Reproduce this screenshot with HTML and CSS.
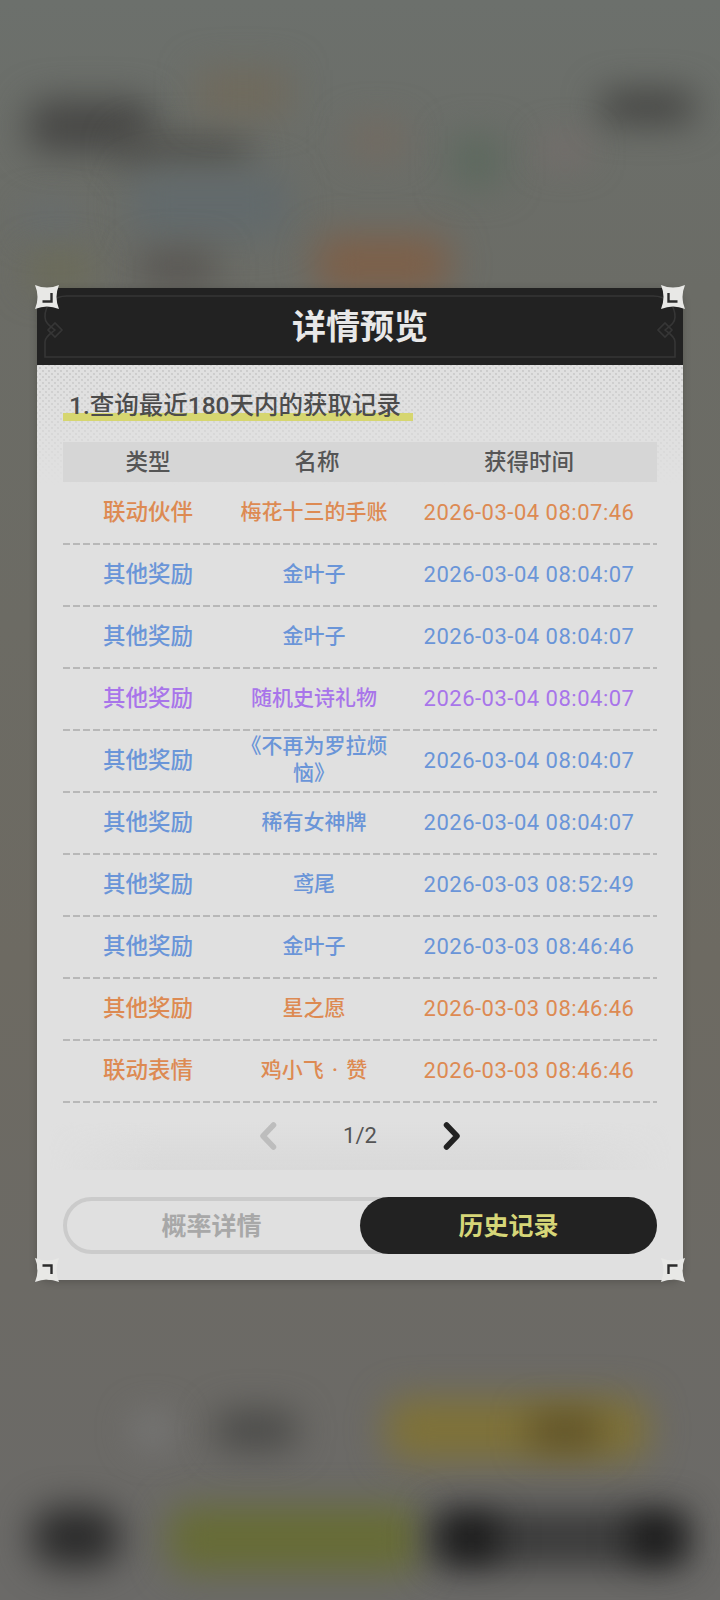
FILE: index.html

```html
<!DOCTYPE html>
<html lang="zh-CN">

<head>
    <meta charset="UTF-8">
    <meta name="viewport" content="width=device-width, initial-scale=1.0">
    <title>详情预览</title>
    <link rel="stylesheet" href="styles.css">
</head>

<body>
    <!-- blurred game scene behind the dialog -->
    <div class="scene">
        <div class="blob blob-a"></div>
        <div class="blob blob-b"></div>
        <div class="blob blob-c"></div>
        <div class="blob blob-d"></div>
        <div class="blob blob-e"></div>
        <div class="blob blob-f"></div>
        <div class="blob blob-g"></div>
        <div class="blob blob-h"></div>
        <div class="blob blob-i"></div>
        <div class="blob blob-j"></div>
        <div class="blob blob-k"></div>
        <div class="blob blob-l"></div>
        <div class="blob blob-m"></div>
        <div class="blob blob-n"></div>
        <div class="blob blob-o"></div>
        <div class="blob blob-p"></div>
        <div class="blob blob-q"></div>
        <div class="blob blob-r"></div>
        <div class="blob blob-s"></div>
        <div class="blob blob-t"></div>
        <div class="blob blob-u"></div>
    </div>

    <div class="dialog">
        <svg class="corner corner-tl" viewBox="0 0 24 24"><use href="#star"></use></svg>
        <svg class="corner corner-tr" viewBox="0 0 24 24"><use href="#star"></use></svg>
        <svg class="corner corner-bl" viewBox="0 0 24 24"><use href="#star"></use></svg>
        <svg class="corner corner-br" viewBox="0 0 24 24"><use href="#star"></use></svg>

        <header class="dialog-head">
            <svg class="head-frame" viewBox="0 0 646 77">
                <path d="M30 8H616C630 8 638 17 638 29C638 35 633 38 628 42C633 46 638 49 638 54V69H8V54C8 49 13 46 18 42C13 38 8 35 8 29C8 17 16 8 30 8Z" />
                <path d="M11 42L18 35L25 42L18 49Z" />
                <path d="M635 42L628 35L621 42L628 49Z" />
            </svg>
            <h1>详情预览</h1>
        </header>

        <div class="dialog-body">
            <div class="note-wrap">
                <h2 class="note">1.查询最近180天内的获取记录</h2>
            </div>

            <div class="table-head">
                <span>类型</span>
                <span>名称</span>
                <span>获得时间</span>
            </div>

            <div class="row orange"><span>联动伙伴</span><span>梅花十三的手账</span><span>2026-03-04 08:07:46</span></div>
            <div class="row blue"><span>其他奖励</span><span>金叶子</span><span>2026-03-04 08:04:07</span></div>
            <div class="row blue"><span>其他奖励</span><span>金叶子</span><span>2026-03-04 08:04:07</span></div>
            <div class="row purple"><span>其他奖励</span><span>随机史诗礼物</span><span>2026-03-04 08:04:07</span></div>
            <div class="row blue"><span>其他奖励</span><span>《不再为罗拉烦恼》</span><span>2026-03-04 08:04:07</span></div>
            <div class="row blue"><span>其他奖励</span><span>稀有女神牌</span><span>2026-03-04 08:04:07</span></div>
            <div class="row blue"><span>其他奖励</span><span>鸢尾</span><span>2026-03-03 08:52:49</span></div>
            <div class="row blue"><span>其他奖励</span><span>金叶子</span><span>2026-03-03 08:46:46</span></div>
            <div class="row orange"><span>其他奖励</span><span>星之愿</span><span>2026-03-03 08:46:46</span></div>
            <div class="row orange"><span>联动表情</span><span>鸡小飞 · 赞</span><span>2026-03-03 08:46:46</span></div>

            <div class="pager">
                <svg class="arrow arrow-off" viewBox="0 0 18 28"><path d="M14.5 3L4 14L14.5 25" /></svg>
                <span class="page-num">1/2</span>
                <svg class="arrow" viewBox="0 0 18 28"><path d="M3.5 3L14 14L3.5 25" /></svg>
            </div>
        </div>

        <div class="dialog-foot">
            <div class="tabs">
                <div class="tab">概率详情</div>
                <div class="tab tab-on">历史记录</div>
            </div>
        </div>
    </div>

    <svg class="defs" width="0" height="0">
        <defs>
            <g id="star">
                <path class="star-fill" d="M0 0Q12 5 24 0Q19 12 24 24Q12 19 0 24Q5 12 0 0Z" />
                <path class="star-mark" d="M16.5 8V16.5H7.5" />
            </g>
        </defs>
    </svg>
</body>

</html>
```

FILE: styles.css

```css
* {
    box-sizing: border-box;
}
html, body {
    margin: 0;
    padding: 0;
}
body {
    width: 720px;
    height: 1600px;
    position: relative;
    overflow: hidden;
    background-color: #6c6b66;
    font-family: Roboto, "Noto Sans CJK SC", "Noto Sans", sans-serif;
}
.defs {
    position: absolute;
}

/* backdrop */
.scene {
    position: absolute;
    inset: 0;
    overflow: hidden;
    background: linear-gradient(180deg, #6c706c 0%, #6b6c66 18%, #6d6a62 60%, #6b6a68 100%);
}
.blob {
    position: absolute;
    filter: blur(18px);
}
.blob-a { left: 28px; top: 100px; width: 125px; height: 52px; background: #474745; border-radius: 18px; }
.blob-b { left: 120px; top: 136px; width: 130px; height: 32px; background: #50504c; border-radius: 14px; }
.blob-c { left: 600px; top: 92px; width: 94px; height: 30px; background: #40403e; border-radius: 12px; }
.blob-d { left: 130px; top: 172px; width: 160px; height: 66px; background: #626a6c; border-radius: 20px; }
.blob-e { left: 26px; top: 208px; width: 50px; height: 24px; background: #666d70; }
.blob-f { left: 315px; top: 236px; width: 135px; height: 56px; background: #7d6049; border-radius: 20px; }
.blob-g { left: 197px; top: 70px; width: 92px; height: 46px; background: #706a5c; }
.blob-h { left: 452px; top: 136px; width: 50px; height: 50px; background: #5c695e; }
.blob-i { left: 134px; top: 1414px; width: 38px; height: 32px; background: #7c7c7c; border-radius: 50%; }
.blob-j { left: 216px; top: 1412px; width: 80px; height: 36px; background: #484846; border-radius: 12px; }
.blob-k { left: 386px; top: 1398px; width: 262px; height: 62px; background: #7f7238; border-radius: 20px; }
.blob-l { left: 168px; top: 1506px; width: 254px; height: 66px; background: #676c36; border-radius: 20px; }
.blob-m { left: 32px; top: 1508px; width: 88px; height: 58px; background: #2a2a2a; border-radius: 26px; }
.blob-n { left: 430px; top: 1510px; width: 256px; height: 56px; background: #3a3a3a; border-radius: 14px; }
.blob-o { left: 444px; top: 1518px; width: 54px; height: 40px; background: #141414; }
.blob-p { left: 630px; top: 1518px; width: 52px; height: 40px; background: #141414; }
.blob-q { left: 530px; top: 1414px; width: 70px; height: 34px; background: #5d4f26; }
.blob-r { left: 140px; top: 252px; width: 75px; height: 32px; background: #565350; }
.blob-s { left: 350px; top: 124px; width: 54px; height: 32px; background: #746a60; }
.blob-t { left: 544px; top: 140px; width: 42px; height: 20px; background: #7b6e6d; }
.blob-u { left: 30px; top: 254px; width: 62px; height: 32px; background: #6c6c56; }

/* dialog */
.dialog {
    position: absolute;
    left: 37px;
    top: 288px;
    width: 646px;
    height: 992px;
    display: flex;
    flex-direction: column;
    background-color: #e0e0e0;
    border-radius: 14px;
    box-shadow: 0 2px 8px rgba(0, 0, 0, .2);
}
.corner {
    position: absolute;
    width: 24px;
    height: 24px;
    z-index: 2;
}
.star-fill {
    fill: #e8e8e6;
}
.star-mark {
    fill: none;
    stroke: #2c2c2c;
    stroke-width: 2.4;
}
.corner-tl { left: -2px; top: -3px; }
.corner-tr { right: -2px; top: -3px; transform: scaleX(-1); }
.corner-bl { left: -2px; bottom: -2px; transform: scaleY(-1); }
.corner-br { right: -2px; bottom: -2px; transform: scale(-1); }

.dialog-head {
    position: relative;
    height: 77px;
    display: flex;
    align-items: center;
    justify-content: center;
    background-color: #222;
    border-radius: 14px 14px 0 0;
}
.head-frame {
    position: absolute;
    inset: 0;
    width: 100%;
    height: 100%;
}
.head-frame path {
    fill: none;
    stroke: #363636;
    stroke-width: 1.6;
}
.dialog-head h1 {
    position: relative;
    margin: 0 0 -2px;
    color: #e8e8e8;
    font-size: 34px;
    font-weight: 700;
    line-height: 1.2;
}

.dialog-body {
    position: relative;
    height: 805px;
    padding: 0 26px;
    background-color: #e0e0e0;
    background-image:
        linear-gradient(180deg, transparent 0, #e0e0e0 120px),
        radial-gradient(circle, rgba(150, 150, 150, .28) 1px, transparent 1.5px),
        radial-gradient(circle, rgba(150, 150, 150, .28) 1px, transparent 1.5px);
    background-size: 100% 100%, 6px 6px, 6px 6px;
    background-position: 0 0, 0 0, 3px 3px;
    background-repeat: no-repeat, repeat, repeat;
}
/* soft shade above the tabs, fades out to the sides */
.dialog-body::after {
    content: "";
    position: absolute;
    left: 12px;
    right: 12px;
    bottom: 0;
    height: 48px;
    background: linear-gradient(180deg, transparent, #d9d9d9);
    -webkit-mask-image: linear-gradient(90deg, transparent, #000 18%, #000 82%, transparent);
    mask-image: linear-gradient(90deg, transparent, #000 18%, #000 82%, transparent);
}
.note-wrap {
    height: 77px;
    padding-top: 27px;
}
.note {
    display: inline-block;
    width: 350px;
    margin: 0;
    padding: 2px 0 4px 6px;
    color: #4c4c4c;
    font-size: 24.5px;
    font-weight: 500;
    line-height: 23px;
    white-space: nowrap;
    background: linear-gradient(#d6d670, #d6d670) left bottom / 100% 8px no-repeat;
}

.table-head,
.row {
    display: grid;
    align-items: center;
    text-align: center;
}
.table-head {
    grid-template-columns: 170px 168px 256px;
    height: 40px;
    margin-bottom: 1px;
    padding-bottom: 5px;
    background-color: #d6d6d6;
    color: #555;
    font-size: 22.5px;
    font-weight: 500;
}
.row {
    grid-template-columns: 170px 162px 262px;
    height: 62px;
    padding-bottom: 4px;
    font-size: 21px;
    line-height: 27px;
    font-weight: 500;
    background: repeating-linear-gradient(90deg, #b8b8b8 0 7px, transparent 7px 10px) left bottom / 100% 2px no-repeat;
}
.row span:first-child {
    font-size: 22.5px;
}
.row span:nth-child(2) {
    padding: 0 4px;
    word-spacing: 3px;
}
.row span:last-child {
    padding-left: 6px;
    font-size: 22px;
    font-weight: 400;
    letter-spacing: .5px;
    white-space: nowrap;
}
.orange { color: #dd8a52; }
.blue { color: #6a95d8; }
.purple { color: #a875ea; }

.pager {
    position: relative;
    z-index: 1;
    height: 65px;
    display: flex;
    align-items: center;
    justify-content: center;
    gap: 65px;
}
.arrow {
    width: 18px;
    height: 28px;
}
.arrow path {
    fill: none;
    stroke: #222;
    stroke-width: 5.5;
    stroke-linecap: round;
    stroke-linejoin: round;
}
.arrow-off path {
    stroke: #bdbdbd;
}
.page-num {
    width: 36px;
    color: #555;
    font-size: 22px;
    text-align: center;
    white-space: nowrap;
}

.dialog-foot {
    flex: 1;
    padding: 27px 26px 0;
}
.tabs {
    height: 57px;
    display: flex;
    border: 4px solid #cbcbcb;
    border-radius: 29px;
}
.tab {
    width: 297px;
    margin-left: -4px;
    padding-bottom: 4px;
    display: flex;
    align-items: center;
    justify-content: center;
    color: #a8a8a8;
    font-size: 25px;
    font-weight: 700;
}
.tab-on {
    width: 297px;
    height: 57px;
    margin: -4px -4px -4px 0;
    background-color: #222;
    border-radius: 29px;
    color: #d6d678;
}
```
